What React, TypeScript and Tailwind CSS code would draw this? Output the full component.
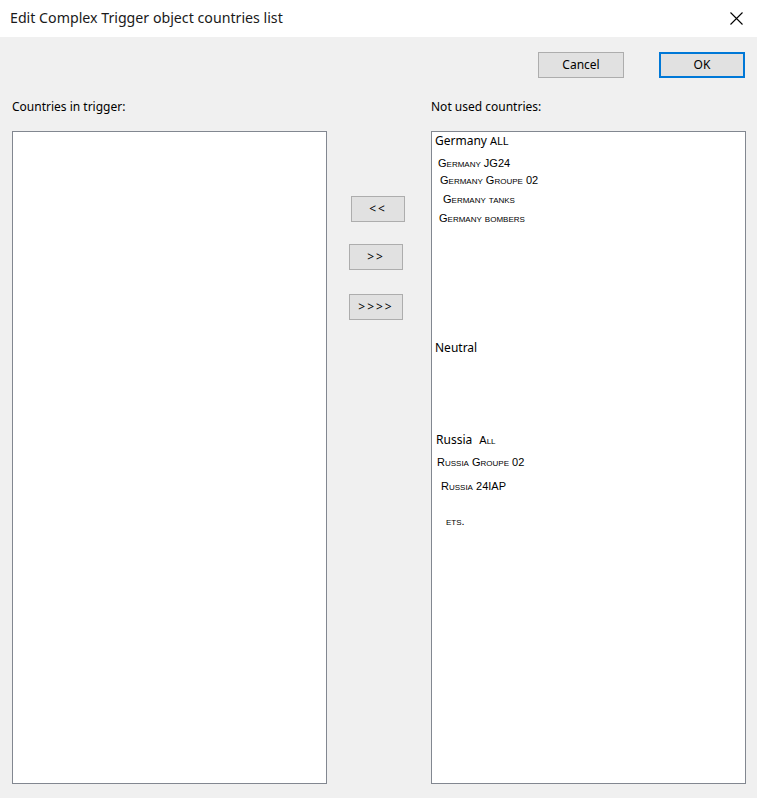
import React from 'react';

const sc = "[font-family:'Liberation_Sans',Arial,sans-serif] [font-variant-caps:small-caps]";

export default function App() {
  return (
    <div className="w-[757px] h-[798px] flex flex-col bg-[#f0f0f0] text-black [font-family:'Noto_Sans',sans-serif] overflow-hidden">
      {/* Title bar */}
      <div className="h-[37px] shrink-0 bg-white flex items-center justify-between pl-[10px] pr-[14px]">
        <span className="text-[14.2px] leading-none text-[#1a1a1a]">Edit Complex Trigger object countries list</span>
        <svg width="13" height="13" viewBox="0 0 13 13" className="text-black">
          <path d="M0.5 0.5 L12.5 12.5 M12.5 0.5 L0.5 12.5" stroke="currentColor" strokeWidth="1.1" />
        </svg>
      </div>

      {/* Buttons */}
      <div className="flex justify-end gap-[35px] pr-[12px] mt-[15px]">
        <button className="w-[86px] h-[26px] bg-[#e1e1e1] border border-[#adadad] text-[12px]">Cancel</button>
        <button className="w-[86px] h-[26px] bg-[#e1e1e1] border-2 border-[#0078d7] text-[12px]">OK</button>
      </div>

      {/* Main */}
      <div className="flex flex-1 px-[11px] pl-[12px] pt-[20px] pb-[14px]">
        <div className="w-[315px] flex flex-col">
          <div className="h-[18px] text-[12px] leading-[18px]">Countries in trigger:</div>
          <div className="mt-[15px] flex-1 bg-white border border-[#828790]" />
        </div>

        <div className="w-[104px] flex flex-col items-start pt-[33px]">
          <button className="mt-[65px] ml-[24px] w-[54px] h-[26px] bg-[#e1e1e1] border border-[#adadad] text-[12px] tracking-[2px]">&lt;&lt;</button>
          <button className="mt-[22px] ml-[22px] w-[54px] h-[26px] bg-[#e1e1e1] border border-[#adadad] text-[12px] tracking-[2px]">&gt;&gt;</button>
          <button className="mt-[24px] ml-[22px] w-[54px] h-[26px] bg-[#e1e1e1] border border-[#adadad] text-[12px] tracking-[2px]">&gt;&gt;&gt;&gt;</button>
        </div>

        <div className="w-[315px] flex flex-col">
          <div className="h-[18px] text-[12px] leading-[18px]">Not used countries:</div>
          <div className="mt-[15px] flex-1 bg-white border border-[#828790] flex flex-col text-[12px] leading-[16px] whitespace-nowrap">
            <div className="mt-[1px] ml-[3px]">Germany <span className="text-[11px]">ALL</span></div>
            <div className={`mt-[6px] ml-[6px] text-[11px] ${sc}`}>Germany JG24</div>
            <div className={`mt-[1px] ml-[8px] text-[11px] ${sc}`}>Germany Groupe 02</div>
            <div className={`mt-[3px] ml-[11px] text-[11px] ${sc}`}>Germany tanks</div>
            <div className={`mt-[3px] ml-[7px] text-[11px] ${sc}`}>Germany bombers</div>
            <div className="mt-[114px] ml-[3px]">Neutral</div>
            <div className="mt-[76px] ml-[4px]">Russia <span className={`ml-[4px] text-[11px] ${sc}`}>All</span></div>
            <div className={`mt-[6px] ml-[5px] text-[11px] ${sc}`}>Russia Groupe 02</div>
            <div className={`mt-[8px] ml-[9px] text-[11px] ${sc}`}>Russia 24IAP</div>
            <div className={`mt-[19px] ml-[14px] text-[11px] ${sc}`}>ets.</div>
          </div>
        </div>
      </div>
    </div>
  );
}
